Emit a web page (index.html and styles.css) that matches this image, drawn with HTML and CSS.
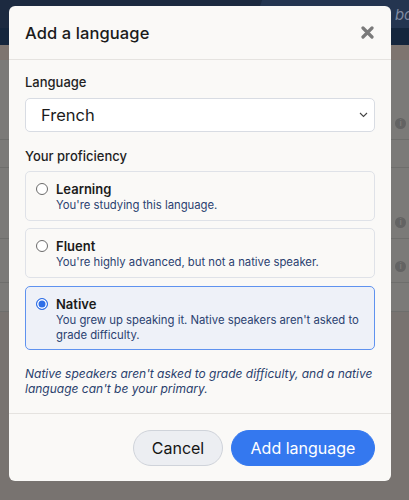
FILE: index.html
```html
<!DOCTYPE html>
<html lang="en">
<head>
<meta charset="utf-8">
<title>Add a language</title>
<link rel="stylesheet" href="styles.css">
</head>
<body>
<div class="backdrop">
  <div class="topbar"><span class="topbar-accent"><span class="brand">bo</span></span></div>
  <div class="navbar"></div>
  <div class="band"></div>
  <div class="rows">
    <div class="row r1"><span class="info">i</span></div>
    <div class="row r2"></div>
    <div class="row r3"><span class="info">i</span></div>
    <div class="row r4"><span class="info">i</span></div>
    <div class="row r5"></div>
  </div>
  <div class="floor"></div>
</div>

<div class="modal" role="dialog" aria-labelledby="mtitle">
  <header class="modal-header">
    <h2 id="mtitle" class="modal-title">Add a language</h2>
    <button class="close" aria-label="Close">
      <svg width="13" height="13" viewBox="0 0 13 13"><path d="M2 2 L11 11 M11 2 L2 11" stroke="#7a7a7a" stroke-width="3.2" stroke-linecap="round"/></svg>
    </button>
  </header>
  <div class="modal-body">
    <label class="field-label">Language</label>
    <div class="select">
      <span>French</span>
      <svg class="chev" width="9" height="6" viewBox="0 0 9 6"><path d="M1 1 L4.5 4.5 L8 1" fill="none" stroke="#444" stroke-width="1.1"/></svg>
    </div>
    <div class="field-label prof">Your proficiency</div>
    <div class="options">
      <div class="option">
        <span class="radio"></span>
        <div class="opt-text">
          <div class="opt-title">Learning</div>
          <div class="opt-desc">You're studying this language.</div>
        </div>
      </div>
      <div class="option">
        <span class="radio"></span>
        <div class="opt-text">
          <div class="opt-title">Fluent</div>
          <div class="opt-desc">You're highly advanced, but not a native speaker.</div>
        </div>
      </div>
      <div class="option selected">
        <span class="radio on"></span>
        <div class="opt-text">
          <div class="opt-title">Native</div>
          <div class="opt-desc">You grew up speaking it. Native speakers aren't asked to grade difficulty.</div>
        </div>
      </div>
    </div>
    <p class="note">Native speakers aren't asked to grade difficulty, and a native language can't be your primary.</p>
  </div>
  <footer class="modal-footer">
    <button class="btn btn-cancel">Cancel</button>
    <button class="btn btn-primary">Add language</button>
  </footer>
</div>
</body>
</html>
```
FILE: styles.css
```css
* { box-sizing: border-box; }
html, body { margin: 0; padding: 0; }
body {
  width: 409px;
  height: 500px;
  overflow: hidden;
  position: relative;
  font-family: Inter, "Noto Sans", sans-serif;
  background: #7b7a78;
}

/* dimmed page behind the dialog */
.backdrop { display: flex; flex-direction: column; height: 500px; }
.topbar { height: 28px; background: #1c2a40; position: relative; overflow: hidden; }
.topbar-accent {
  position: absolute; left: 252px; top: 0; right: 0; bottom: 0;
  background: #243550;
  transform: skewX(-20deg); transform-origin: bottom left;
}
.brand {
  position: absolute; left: 138px; top: 5px;
  transform: skewX(20deg);
  font-style: italic; font-size: 15px; color: #7f8aa0;
}
.navbar { height: 17px; background: #15263d; }
.band { height: 15px; background: #7e7570; }
.rows { display: flex; flex-direction: column; }
.row { border-bottom: 1px solid #6e6e6c; position: relative; }
.r1 { height: 80px; }
.r2 { height: 28px; }
.r3 { height: 71px; }
.r4 { height: 44px; }
.r5 { height: 29px; }
.info {
  position: absolute; right: 3px; bottom: 10px;
  width: 11px; height: 11px; border-radius: 50%;
  background: #636363; color: #7b7a78; font-size: 8px; line-height: 11px;
  text-align: center; font-weight: 700;
}
.floor { flex: 1; background: #787370; }

/* dialog */
.modal {
  position: absolute; left: 9px; top: 6px;
  width: 382px; height: 475px;
  background: #faf9f7;
  border-radius: 6px;
  display: flex; flex-direction: column;
  color: #1b1b1b;
}
.modal-header {
  height: 54px; flex: none;
  display: flex; align-items: center; justify-content: space-between;
  padding: 0 17px 0 16px;
  border-bottom: 1px solid #e5e3e0;
}
.modal-title { margin: 0; font-size: 16.5px; font-weight: 500; letter-spacing: 0.1px; }
.close { border: 0; background: none; padding: 0; display: flex; }

.modal-body { padding: 14px 16px 0 16px; flex: 1; }
.field-label { display: block; font-size: 13px; font-weight: 500; color: #1f1f1f; line-height: 16px; }
.select {
  margin-top: 8px;
  height: 34px;
  background: #fff;
  border: 1px solid #d8dce3;
  border-radius: 5px;
  display: flex; align-items: center; justify-content: space-between;
  padding: 0 6px 0 15px;
  font-size: 16.5px; color: #1b1b1b;
}
.prof { margin-top: 16px; }
.options { margin-top: 7px; display: flex; flex-direction: column; gap: 7px; }
.option {
  border: 1px solid #dfe2e8;
  border-radius: 5px;
  display: flex; align-items: flex-start; gap: 8px;
  padding: 9px 10px 0 10px;
  height: 50px;
}
.option.selected { border-color: #5f92ef; background: #eef1f8; margin-top: 1px; height: 64px; }
.radio {
  width: 12px; height: 12px; border-radius: 50%;
  border: 1px solid #6b6b6b; background: #fff;
  margin-top: 2px; flex: none;
}
.radio.on { border: 1.5px solid #2f6fe7; box-shadow: inset 0 0 0 1.5px #fff; background: #2f6fe7; }
.opt-title { font-size: 13px; font-weight: 600; line-height: 16px; color: #1b1b1b; }
.opt-desc { font-size: 11.3px; line-height: 15px; color: #2b4170; margin-top: 1px; }
.note {
  margin: 16px 0 0 0;
  font-size: 12px; font-style: italic; line-height: 15px; color: #2a3f6d;
}

.modal-footer {
  height: 68px; flex: none;
  border-top: 1px solid #e5e3e0;
  display: flex; align-items: center; justify-content: flex-end; gap: 8px;
  padding: 0 16px;
}
.btn {
  height: 36px; border-radius: 18px;
  font-family: inherit; font-size: 16px; font-weight: 400;
}
.btn-cancel { width: 90px; background: #eceef2; border: 1px solid #cfd3da; color: #151515; }
.btn-primary { width: 144px; background: #3478ef; border: 1px solid #3478ef; color: #fff; }
```
